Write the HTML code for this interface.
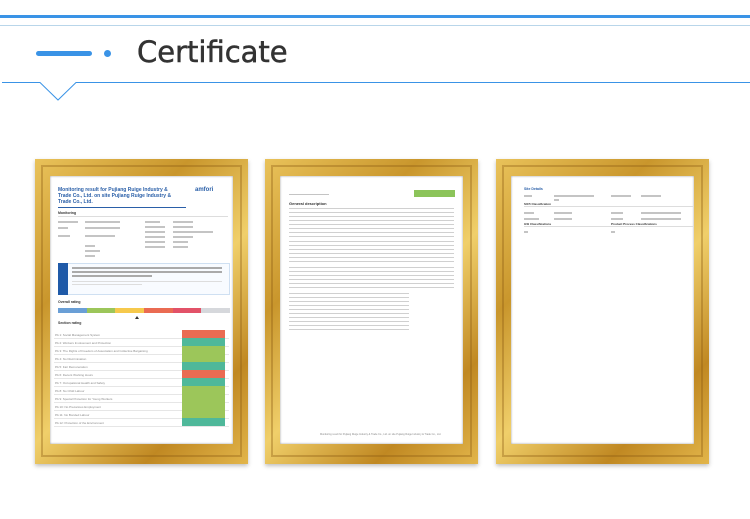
<!DOCTYPE html><html><head><style>
*{margin:0;padding:0;box-sizing:border-box}
body{width:750px;height:519px;background:#fff;position:relative;overflow:hidden;font-family:"Liberation Sans",sans-serif}
.a{position:absolute}
.frame{position:absolute;width:213px;height:305px;top:159px;background:linear-gradient(135deg,#e9c25a,#c9962c 30%,#f0cf6a 55%,#c08822 80%,#e2b54a);box-shadow:0 2px 4px rgba(0,0,0,.25)}
.frame:before{content:"";position:absolute;left:6px;top:6px;right:6px;bottom:7px;border:2px solid #8a5a10;opacity:.35}
.paper{position:absolute;left:15px;top:17px;right:15px;bottom:20px;background:#fff;box-shadow:inset 0 0 2px rgba(0,0,0,.4);font-size:3px;color:#777;overflow:hidden}
.t{position:absolute;white-space:nowrap}
.g{position:absolute;height:1.5px;background:#c4c4c4}
.row{position:absolute;left:4px;width:175px;height:9px;border-bottom:1px solid #e6e6e6}
.row span{position:absolute;left:1px;top:3px;font-size:3px;color:#888}
.row i{position:absolute;right:4px;top:0;width:43px;height:8px}
.txt{position:absolute;background:repeating-linear-gradient(#d0d0d0 0 1px,transparent 1px 4px)}
</style></head><body>
<div class="a" style="left:0;top:15px;width:750px;height:3px;background:#3a93e6"></div>
<div class="a" style="left:0;top:25px;width:750px;height:1px;background:#b9d6ea"></div>
<div class="a" style="left:36px;top:51px;width:56px;height:5px;border-radius:3px;background:#3a93e6"></div>
<div class="a" style="left:104px;top:50px;width:7px;height:7px;border-radius:50%;background:#3a93e6"></div>
<div class="a" style="left:137px;top:35px;font-size:29px;color:#333;font-family:'DejaVu Sans',sans-serif;-webkit-text-stroke:0.5px #333">Certificate</div>
<svg class="a" style="left:0;top:75px" width="750" height="30"><path d="M2 7.5H40L58 25L76 7.5H750" fill="none" stroke="#3a93e6" stroke-width="1"/></svg>

<div class="frame" style="left:35px"><div class="paper">
<div class="t" style="left:8px;top:11px;font-size:5px;font-weight:bold;color:#2a5fa8;line-height:6px">Monitoring result for Pujiang Ruige Industry &amp;<br>Trade Co., Ltd. on site Pujiang Ruige Industry &amp;<br>Trade Co., Ltd.</div>
<div class="t" style="left:145px;top:11px;font-size:6px;font-weight:bold;color:#2a5fa8">amfori</div>
<div class="a" style="left:8px;top:31px;width:128px;height:1px;background:#2a5fa8"></div>
<div class="t" style="left:8px;top:35px;font-size:3.5px;font-weight:bold;color:#333">Monitoring</div>
<div class="a" style="left:8px;top:40px;width:170px;height:1px;background:#ddd"></div>
<div class="g" style="left:8px;top:45px;width:20px"></div><div class="g" style="left:35px;top:45px;width:35px"></div><div class="g" style="left:95px;top:45px;width:15px"></div><div class="g" style="left:123px;top:45px;width:20px"></div>
<div class="g" style="left:8px;top:51px;width:10px"></div><div class="g" style="left:35px;top:51px;width:35px"></div><div class="g" style="left:95px;top:50px;width:20px"></div><div class="g" style="left:123px;top:50px;width:20px"></div>
<div class="g" style="left:95px;top:55px;width:20px"></div><div class="g" style="left:123px;top:55px;width:40px"></div>
<div class="g" style="left:8px;top:59px;width:12px"></div><div class="g" style="left:35px;top:59px;width:30px"></div><div class="g" style="left:95px;top:60px;width:20px"></div><div class="g" style="left:123px;top:60px;width:20px"></div>
<div class="g" style="left:95px;top:65px;width:20px"></div><div class="g" style="left:123px;top:65px;width:15px"></div>
<div class="g" style="left:95px;top:70px;width:20px"></div><div class="g" style="left:123px;top:70px;width:15px"></div>
<div class="g" style="left:35px;top:69px;width:10px"></div><div class="g" style="left:35px;top:74px;width:15px"></div><div class="g" style="left:35px;top:79px;width:10px"></div>
<div class="a" style="left:8px;top:87px;width:172px;height:32px;border:1px solid #cfe0f2;background:#f8fbff"></div>
<div class="a" style="left:8px;top:87px;width:10px;height:32px;background:#1f5aa8"></div>
<div class="g" style="left:22px;top:91px;width:150px;background:#aaa"></div><div class="g" style="left:22px;top:95px;width:150px;background:#aaa"></div><div class="g" style="left:22px;top:99px;width:80px;background:#aaa"></div>
<div class="g" style="left:22px;top:105px;width:150px;height:1px;background:#ddd"></div><div class="g" style="left:22px;top:108px;width:70px;height:1px;background:#ddd"></div>
<div class="t" style="left:8px;top:124px;font-size:3.5px;font-weight:bold;color:#333">Overall rating</div>
<div class="a" style="left:8px;top:132px;height:5px;width:172px;display:flex">
<div style="flex:1;background:#6a9fd6"></div><div style="flex:1;background:#9cc65a"></div><div style="flex:1;background:#f6c94c"></div><div style="flex:1;background:#ea6b52"></div><div style="flex:1;background:#e25268"></div><div style="flex:1;background:#d6d8dc"></div></div>
<div class="a" style="left:85px;top:138px;width:0;height:0;border:2px solid transparent;border-bottom:3px solid #333"></div>
<div class="t" style="left:8px;top:145px;font-size:3.5px;font-weight:bold;color:#333">Section rating</div>
<div class="row" style="top:154px"><span>PA 1: Social Management System</span><i style="background:#ea6b52"></i></div>
<div class="row" style="top:162px"><span>PA 2: Workers Involvement and Protection</span><i style="background:#4fb89a"></i></div>
<div class="row" style="top:170px"><span>PA 3: The Rights of Freedom of Association and Collective Bargaining</span><i style="background:#9cc65a"></i></div>
<div class="row" style="top:178px"><span>PA 4: No Discrimination</span><i style="background:#9cc65a"></i></div>
<div class="row" style="top:186px"><span>PA 5: Fair Remuneration</span><i style="background:#4fb89a"></i></div>
<div class="row" style="top:194px"><span>PA 6: Decent Working Hours</span><i style="background:#ea6b52"></i></div>
<div class="row" style="top:202px"><span>PA 7: Occupational Health and Safety</span><i style="background:#4fb89a"></i></div>
<div class="row" style="top:210px"><span>PA 8: No Child Labour</span><i style="background:#9cc65a"></i></div>
<div class="row" style="top:218px"><span>PA 9: Special Protection for Young Workers</span><i style="background:#9cc65a"></i></div>
<div class="row" style="top:226px"><span>PA 10: No Precarious Employment</span><i style="background:#9cc65a"></i></div>
<div class="row" style="top:234px"><span>PA 11: No Bonded Labour</span><i style="background:#9cc65a"></i></div>
<div class="row" style="top:242px"><span>PA 12: Protection of the Environment</span><i style="background:#4fb89a"></i></div>
</div></div>

<div class="frame" style="left:265px"><div class="paper">
<div class="g" style="left:9px;top:18px;width:40px;height:1px"></div>
<div class="a" style="left:134px;top:14px;width:41px;height:7px;background:#8cc45a"></div>
<div class="t" style="left:9px;top:25px;font-size:4px;font-weight:bold;color:#333">General description</div>
<div class="txt" style="left:9px;top:32px;width:165px;height:29px"></div>
<div class="txt" style="left:9px;top:65px;width:165px;height:22px"></div>
<div class="txt" style="left:9px;top:91px;width:165px;height:22px"></div>
<div class="txt" style="left:9px;top:117px;width:120px;height:40px"></div>
<div class="t" style="left:40px;top:257px;font-size:2.5px;color:#888">Monitoring result for Pujiang Ruige Industry &amp; Trade Co., Ltd. on site Pujiang Ruige Industry &amp; Trade Co., Ltd.</div>
</div></div>

<div class="frame" style="left:496px"><div class="paper">
<div class="t" style="left:13px;top:11px;font-size:3.5px;font-weight:bold;color:#2a5fa8">Site Details</div>
<div class="g" style="left:13px;top:19px;width:8px"></div><div class="g" style="left:43px;top:19px;width:40px"></div><div class="g" style="left:43px;top:23px;width:5px"></div><div class="g" style="left:100px;top:19px;width:20px"></div><div class="g" style="left:130px;top:19px;width:20px"></div>
<div class="t" style="left:13px;top:26px;font-size:3px;font-weight:bold;color:#333">SIC5 Classification</div>
<div class="a" style="left:13px;top:30px;width:170px;height:1px;background:#ddd"></div>
<div class="g" style="left:13px;top:36px;width:10px"></div><div class="g" style="left:43px;top:36px;width:18px"></div><div class="g" style="left:100px;top:36px;width:12px"></div><div class="g" style="left:130px;top:36px;width:40px"></div>
<div class="g" style="left:13px;top:42px;width:15px"></div><div class="g" style="left:43px;top:42px;width:18px"></div><div class="g" style="left:100px;top:42px;width:12px"></div><div class="g" style="left:130px;top:42px;width:40px"></div>
<div class="t" style="left:13px;top:46px;font-size:3px;font-weight:bold;color:#333">GSI Classifications</div>
<div class="t" style="left:100px;top:46px;font-size:3px;font-weight:bold;color:#333">Product Process Classifications</div>
<div class="a" style="left:13px;top:50px;width:170px;height:1px;background:#ddd"></div>
<div class="g" style="left:13px;top:55px;width:4px"></div><div class="g" style="left:100px;top:55px;width:4px"></div>
</div></div>
</body></html>
